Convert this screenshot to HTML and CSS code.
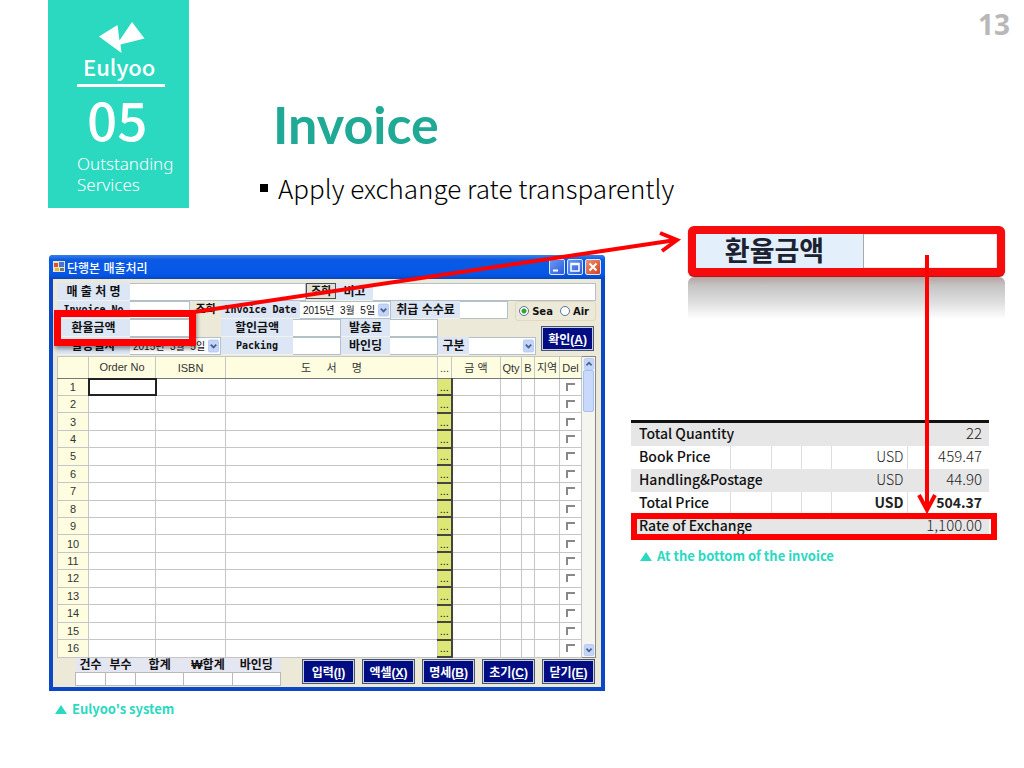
FILE: index.html
```html
<!DOCTYPE html>
<html lang="en">
<head>
    <meta charset="UTF-8">
    <meta name="viewport" content="width=device-width, initial-scale=1.0">
    <title>Eulyoo - Invoice</title>
    <link rel="stylesheet" href="styles.css">
</head>
<body>

    <svg width="0" height="0" class="defs" aria-hidden="true">
        <symbol id="chevron" viewBox="0 0 12 14">
            <rect x="0.5" y="0.5" width="11" height="13" rx="1.5" fill="#c3d5fb" stroke="#b3c6ee"/>
            <path d="M3 5.5l3 3 3-3" fill="none" stroke="#4d6185" stroke-width="2"/>
        </symbol>
    </svg>

    <div class="slide">
        <header class="top">
            <div class="brand">
                <svg class="logo" viewBox="0 0 46 32" aria-hidden="true">
                    <path d="M0 14.500L18.500 3L20.500 18.500L33 0L45.500 16.500L21.500 22.500L22.500 31Z" fill="#fff"/>
                </svg>
                <div class="brand-name">Eulyoo</div>
                <div class="chapter">05</div>
                <div class="chapter-name">Outstanding<br>Services</div>
            </div>
            <div class="heading">
                <h1>Invoice</h1>
                <ul>
                    <li>Apply exchange rate transparently</li>
                </ul>
            </div>
            <div class="page-number">13</div>
        </header>

        <main class="content">
            <figure class="system">
                <div class="window">
                    <div class="titlebar">
                        <svg width="12" height="12" viewBox="0 0 12 12" aria-hidden="true">
                            <rect width="12" height="11" fill="#e8e3cf"/>
                            <rect x="1" y="2" width="4" height="4" fill="#d9542b"/>
                            <rect x="6" y="1" width="5" height="5" fill="#4a76c9"/>
                            <rect x="2" y="7" width="4" height="3" fill="#e9b62f"/>
                            <rect x="7" y="7" width="4" height="3" fill="#777"/>
                        </svg>
                        <span class="title">단행본 매출처리</span>
                        <button class="win-btn" aria-label="Minimize"><svg viewBox="0 0 14 14"><path d="M3 10.500h5" stroke="#fff" stroke-width="2"/></svg></button>
                        <button class="win-btn" aria-label="Maximize"><svg viewBox="0 0 14 14"><path d="M3 3.500h8v7.500H3zM3 4.500h8" fill="none" stroke="#fff" stroke-width="1.500"/></svg></button>
                        <button class="win-btn close" aria-label="Close"><svg viewBox="0 0 14 14"><path d="M3.500 3.500l7 7M10.500 3.500l-7 7" stroke="#fff" stroke-width="2"/></svg></button>
                    </div>

                    <form class="form">
                        <div class="row">
                            <label class="w-label" for="customer">매 출 처 명</label>
                            <input class="w-customer" id="customer" type="text">
                            <button class="find" type="button">조회</button>
                            <label class="w-memo" for="memo">비고</label>
                            <input class="fill" id="memo" type="text">
                        </div>
                        <div class="row">
                            <label class="w-label mono" for="invoiceNo">Invoice No</label>
                            <input class="w-value" id="invoiceNo" type="text">
                            <button class="find flat" type="button">조회</button>
                            <label class="w-date-label mono" for="invoiceDate">Invoice Date</label>
                            <span class="combo w-date">
                                <select id="invoiceDate"><option>2015년 &nbsp;3월 &nbsp;5일</option></select>
                                <svg><use href="#chevron"/></svg>
                            </span>
                            <label class="w-fee" for="fee">취급 수수료</label>
                            <input class="w-small" id="fee" type="text">
                            <div class="radios">
                                <input id="sea" type="radio" name="via" checked><label for="sea">Sea</label>
                                <input id="air" type="radio" name="via"><label for="air">Air</label>
                            </div>
                        </div>
                        <div class="form-body">
                            <div class="rows">
                                <div class="row rate">
                                    <label class="w-label" for="rate">환율금액</label>
                                    <input class="w-value" id="rate" type="text">
                                    <span class="w-space"></span>
                                    <label class="w-mid" for="discount">할인금액</label>
                                    <input class="w-small" id="discount" type="text">
                                    <label class="w-short" for="shipping">발송료</label>
                                    <input class="w-small" id="shipping" type="text">
                                    <span class="mark"></span>
                                </div>
                                <div class="row">
                                    <label class="w-label" for="shipDate">발송일자</label>
                                    <span class="combo w-date">
                                        <select id="shipDate"><option>2015년 &nbsp;3월 &nbsp;5일</option></select>
                                        <svg><use href="#chevron"/></svg>
                                    </span>
                                    <label class="w-mid mono" for="packing">Packing</label>
                                    <input class="w-small" id="packing" type="text">
                                    <label class="w-short" for="binding">바인딩</label>
                                    <input class="w-small" id="binding" type="text">
                                    <label class="w-kind" for="kind">구분</label>
                                    <span class="combo w-select">
                                        <select id="kind"><option></option></select>
                                        <svg><use href="#chevron"/></svg>
                                    </span>
                                </div>
                            </div>
                            <button class="action" type="button">확인(<u>A</u>)</button>
                        </div>
                    </form>

                    <div class="grid">
                        <table>
                            <colgroup>
                                <col class="c-no"><col class="c-order"><col class="c-isbn"><col><col class="c-dots">
                                <col class="c-price"><col class="c-qty"><col class="c-b"><col class="c-area"><col class="c-del">
                            </colgroup>
                            <thead>
                                <tr><th></th><th>Order No</th><th>ISBN</th><th>도 &nbsp; &nbsp; 서 &nbsp; &nbsp; 명</th><th>...</th><th>금 액</th><th>Qty</th><th>B</th><th>지역</th><th>Del</th></tr>
                            </thead>
                            <tbody id="orders"></tbody>
                        </table>
                        <div class="scrollbar">
                            <svg class="up"><use href="#chevron"/></svg>
                            <span class="thumb"></span>
                            <svg><use href="#chevron"/></svg>
                        </div>
                    </div>

                    <div class="bottom">
                        <table class="totals">
                            <tr><th>건수</th><th>부수</th><th>합계</th><th>₩합계</th><th>바인딩</th></tr>
                            <tr><td></td><td></td><td></td><td></td><td></td></tr>
                        </table>
                        <div class="actions">
                            <button class="action">입력(<u>I</u>)</button>
                            <button class="action">엑셀(<u>X</u>)</button>
                            <button class="action">명세(<u>B</u>)</button>
                            <button class="action">초기(<u>C</u>)</button>
                            <button class="action">닫기(<u>E</u>)</button>
                        </div>
                    </div>
                </div>
                <figcaption><span class="tri"></span>Eulyoo's system</figcaption>
            </figure>

            <div class="right">
                <div class="callout">
                    <label for="rateZoom">환율금액</label>
                    <input id="rateZoom" type="text">
                </div>
                <div class="reflection"></div>

                <figure class="invoice">
                    <div class="sheet">
                        <table>
                            <colgroup><col class="i-name"><col class="i-a"><col class="i-b"><col class="i-b"><col class="i-cur"><col></colgroup>
                            <tr class="shade"><th colspan="4">Total Quantity</th><td></td><td>22</td></tr>
                            <tr><th>Book Price</th><td></td><td></td><td></td><td>USD</td><td>459.47</td></tr>
                            <tr class="shade"><th colspan="4">Handling&amp;Postage</th><td>USD</td><td>44.90</td></tr>
                            <tr class="total"><th>Total Price</th><td></td><td></td><td></td><td>USD</td><td>504.37</td></tr>
                            <tr class="shade"><th colspan="4">Rate of Exchange</th><td></td><td>1,100.00</td></tr>
                        </table>
                        <span class="mark"></span>
                    </div>
                    <figcaption><span class="tri"></span>At the bottom of the invoice</figcaption>
                </figure>
            </div>
        </main>

        <svg class="arrows" viewBox="0 0 1024 768" preserveAspectRatio="none" aria-hidden="true">
            <g fill="none" stroke="#fe0000" stroke-width="4">
                <path d="M194 312L676 240M660 233L677 240L662 251"/>
                <path d="M927 255V509M919 495L927 510L935 495"/>
            </g>
        </svg>
    </div>

    <script>
        // empty order lines
        let rows = "";
        for (let i = 1; i <= 16; i++) {
            rows += `<tr><th>${i}</th><td></td><td></td><td></td><td class="dots"><button aria-label="Search ${i}">...</button></td>` +
                `<td></td><td></td><td></td><td></td><td class="del"><input type="checkbox" aria-label="Delete ${i}"></td></tr>`;
        }
        document.getElementById("orders").innerHTML = rows;
    </script>

</body>
</html>
```
FILE: styles.css
```css
:root {
    --mint: #2bd9c1;
    --teal: #20a995;
    --red: #fe0000;
    --navy: #000c82;
    --label: #dce6f5;
    --line: #b9b9b9;
}

* {
    box-sizing: border-box;
}

body {
    margin: 0;
    background: #fff;
    color: #000;
    font-family: "Noto Sans", "Noto Sans CJK KR", sans-serif;
}

button, input, select {
    margin: 0;
    padding: 0;
    border: 0;
    border-radius: 0;
    font: inherit;
    color: inherit;
}

figure, h1, ul {
    margin: 0;
    padding: 0;
}

.defs {
    position: absolute;
}

.slide {
    position: relative;
    min-height: 768px;
}

/* Header */
.top {
    display: flex;
    height: 208px;
    padding: 0 14px 0 48px;
}

.brand {
    width: 141px;
    padding: 22px 0 0 29px;
    background: var(--mint);
    color: #fff;
}

.logo {
    display: block;
    width: 46px;
    height: 32px;
    margin-left: 22px;
}

.brand-name {
    width: 88px;
    padding-left: 6px;
    height: 33px;
    border-bottom: 3px solid #fff;
    font-family: "Noto Sans CJK KR", sans-serif;
    font-size: 22px;
    font-weight: 500;
    line-height: 24px;
}

.chapter {
    padding: 0 0 4px 10px;
    font-family: "Noto Sans CJK KR", sans-serif;
    font-size: 53px;
    font-weight: 500;
    line-height: 62px;
}

.chapter-name {
    font-family: "Noto Sans", sans-serif;
    font-size: 17px;
    font-weight: 300;
    line-height: 21px;
}

.heading {
    flex: 1;
    padding: 91px 0 0 70px;
}

.heading h1 {
    padding-left: 14px;
    font-family: Lato, sans-serif;
    font-size: 52px;
    font-weight: 700;
    line-height: 66px;
    color: var(--teal);
}

.heading ul {
    list-style: none;
    margin-top: 12px;
}

.heading li {
    display: flex;
    align-items: center;
    gap: 10px;
    font-family: "Noto Sans CJK KR", sans-serif;
    font-size: 26px;
    font-weight: 300;
    line-height: 38px;
}

.heading li::before {
    content: "";
    width: 8px;
    height: 8px;
    margin-left: 1px;
    background: #000;
}

.page-number {
    padding-top: 8px;
    font-size: 28px;
    font-weight: 700;
    line-height: 32px;
    color: #b8b8b8;
}

/* Two figures */
.content {
    display: grid;
    grid-template-columns: minmax(0, 556fr) minmax(0, 374fr);
    gap: 26px;
    padding: 18px 19px 0 49px;
}

figcaption {
    display: flex;
    align-items: center;
    gap: 5px;
    font-family: "Noto Sans CJK KR", sans-serif;
    font-size: 13px;
    font-weight: 700;
    line-height: 20px;
    color: var(--mint);
}

.tri {
    border: 6px solid transparent;
    border-top: 0;
    border-bottom: 9px solid var(--mint);
}

.mark {
    position: absolute;
    border: 7px solid var(--red);
}

.system {
    padding-top: 29px;
}

.system figcaption {
    padding: 8px 0 0 6px;
}

/* Window */
.window {
    padding: 0 4px 4px;
    background: #0a48c8;
    border-radius: 4px 4px 0 0;
    font-family: "Liberation Sans", "Noto Sans CJK KR", sans-serif;
    font-size: 11px;
    color: #111;
}

.titlebar {
    display: flex;
    align-items: center;
    gap: 2px;
    height: 24px;
    margin: 0 -4px;
    padding: 0 4px;
    border-radius: 4px 4px 0 0;
    background: linear-gradient(#3a80e8, #0b5ae4 20%, #0657e8 80%, #0647c4);
    color: #fff;
}

.title {
    flex: 1;
    font-size: 12px;
    font-weight: 500;
}

.win-btn {
    width: 16px;
    height: 16px;
    border: 1px solid #dce8ff;
    border-radius: 2px;
    background: linear-gradient(135deg, #6c9af5, #2a5cd8);
}

.win-btn svg {
    display: block;
}

.win-btn.close {
    background: linear-gradient(135deg, #ee9272, #cf4420);
}

.form {
    padding: 4px 5px 1px 4px;
    background: #ece9d8;
}

.row {
    display: flex;
    height: 18px;
}

.row > label {
    border-bottom: 1px solid #f2f1ea;
    background: var(--label);
    font-size: 12px;
    font-weight: 700;
    line-height: 18px;
    text-align: center;
    white-space: nowrap;
}

.row > label.mono {
    font-family: "DejaVu Sans Mono", monospace;
    font-size: 10px;
}

.row > input, .combo {
    border: 1px solid #b4c0c8;
    border-width: 1px 1px 1px 0;
    background: #fff;
}

.w-label {
    width: 73px;
}

.w-customer {
    width: 176px;
}

.w-memo {
    width: 37px;
}

.fill {
    flex: 1;
    min-width: 0;
}

.w-value {
    width: 60px;
}

.w-date-label {
    width: 79px;
}

.w-date {
    width: 91px;
}

.w-fee {
    width: 69px;
}

.w-small {
    width: 48px;
}

.w-space {
    width: 31px;
}

.w-mid {
    width: 72px;
}

.w-short {
    width: 49px;
}

.w-kind {
    width: 31px;
}

.w-select {
    width: 67px;
}

.find {
    width: 30px;
    height: 16px;
    border: 1px solid #44505c;
    background: #e3e1d4;
    font-size: 11px;
    font-weight: 700;
    line-height: 13px;
}

.find.flat {
    width: 31px;
    border: 0;
    background: #ece9d8;
}

.combo {
    display: flex;
    align-items: center;
    padding-right: 1px;
}

.combo select {
    flex: 1;
    min-width: 0;
    height: 16px;
    padding-left: 3px;
    appearance: none;
    background: #fff;
    font-size: 10px;
}

.combo svg {
    width: 11px;
    height: 14px;
}

.form-body {
    display: flex;
    justify-content: space-between;
    align-items: flex-end;
    padding-right: 2px;
}

.form-body .action {
    margin-bottom: 4px;
}

.rate {
    position: relative;
}

.rate .mark {
    left: -3px;
    top: -9px;
    width: 142px;
    height: 36px;
    box-shadow: 1px 3px 4px rgba(0, 0, 0, 0.4);
}

.radios {
    display: flex;
    align-items: center;
    gap: 3px;
    height: 20px;
    margin-left: auto;
    padding: 0 6px 0 3px;
    border: 1px solid #e0d9bf;
    border-radius: 3px;
    font-size: 10px;
    font-weight: 700;
    font-family: "DejaVu Sans", sans-serif;
}

.radios input {
    appearance: none;
    width: 10px;
    height: 10px;
    border: 1px solid #56789c;
    border-radius: 50%;
    background: #fff;
}

.radios label + input {
    margin-left: 4px;
}

.radios input:checked {
    background: radial-gradient(#35a435 2px, #fff 3px);
}

.action {
    width: 53px;
    height: 25px;
    border: 1px solid #47566f;
    outline: 1px solid #c8d0e0;
    outline-offset: -2px;
    background: var(--navy);
    color: #fff;
    font-size: 12px;
    font-weight: 700;
}

/* Order grid */
.grid {
    display: flex;
    padding: 0 5px 0 4px;
    background: #ece9d8;
}

.grid table {
    flex: 1;
    width: 100%;
    min-width: 0;
    height: 302px;
    table-layout: fixed;
    border-collapse: collapse;
    border: 1px solid #666;
    background: #fff;
}

.grid th, .grid td {
    padding: 0;
    border: 1px solid #c6c6c6;
    font-weight: 400;
    line-height: 14px;
}

.grid th {
    background: #fffde0;
    color: #333;
}

.grid thead th {
    height: 22px;
    border-bottom-color: #777;
    white-space: nowrap;
}

.grid tbody tr:first-child td:nth-child(2) {
    border: 2px solid #222;
}

.c-no {
    width: 31px;
}

.c-order {
    width: 67px;
}

.c-isbn {
    width: 70px;
}

.c-dots {
    width: 14px;
}

.c-price {
    width: 49px;
}

.c-qty {
    width: 21px;
}

.c-b {
    width: 13px;
}

.c-area {
    width: 25px;
}

.c-del {
    width: 22px;
}

.grid .dots {
    background: #dce775;
    border-right: 2px solid #444;
    border-bottom: 2px solid #444;
}

.dots button {
    display: block;
    width: 100%;
    height: 14px;
    background: none;
    line-height: 12px;
}

.del input {
    display: block;
    appearance: none;
    width: 9px;
    height: 8px;
    margin: 0 auto;
    border: solid #888;
    border-width: 2px 0 0 2px;
}

.scrollbar {
    display: flex;
    flex-direction: column;
    align-items: center;
    flex: none;
    width: 14px;
    padding: 1px 0;
    border: 1px solid #888;
    border-left: 0;
    background: #f5f5f0;
}

.scrollbar svg {
    width: 12px;
    height: 12px;
}

.scrollbar .up {
    transform: rotate(180deg);
}

.thumb {
    width: 11px;
    height: 42px;
    margin-bottom: auto;
    border: 1px solid #a9bfee;
    border-radius: 2px;
    background: #c9d9fc;
}

.bottom {
    display: flex;
    justify-content: space-between;
    padding: 0 6px 1px 22px;
    background: #ece9d8;
}

.totals {
    width: 206px;
    height: 28px;
    table-layout: fixed;
    border-collapse: collapse;
}

.totals th {
    height: 14px;
    padding: 1px 0 0;
    background: #e4e6f2;
    font-size: 12px;
    line-height: 13px;
    white-space: nowrap;
}

.totals th:nth-child(-n+2) {
    width: 30px;
}

.totals td {
    padding: 0;
    border: 1px solid var(--line);
    background: #fff;
}

.actions {
    display: flex;
    gap: 7px;
    padding-top: 1px;
}

/* Enlarged field */
.callout {
    display: flex;
    height: 50px;
    margin-left: 57px;
    border: 8px solid #f60c0c;
    border-radius: 6px;
    background: #fff;
    box-shadow: inset 0 0 1px #800, 0 1px 1px #a00000;
}

.callout label {
    width: 168px;
    padding-right: 10px;
    border-right: 1px solid #aaa;
    background: #e4effc;
    font-family: "Noto Sans CJK KR", sans-serif;
    font-size: 27px;
    font-weight: 700;
    line-height: 32px;
    text-align: center;
    color: #1c2230;
}

.callout input {
    flex: 1;
    min-width: 0;
    background: none;
}

.reflection {
    height: 42px;
    margin: 1px 0 0 57px;
    border-radius: 6px 6px 0 0;
    background: linear-gradient(#b9a0a0, #c4c4c4 20%, #dedede 60%, #fff);
}

/* Invoice sheet */
.invoice {
    margin: 101px 16px 0 0;
}

.sheet {
    position: relative;
    border-top: 3px solid #111;
}

.sheet table {
    width: 100%;
    table-layout: fixed;
    border-collapse: collapse;
    font-family: "Noto Sans CJK KR", sans-serif;
    font-size: 14px;
}

.sheet th, .sheet td {
    height: 23px;
    padding: 0 7px 3px 0;
    border-right: 1px solid #ddd;
    font-weight: 300;
    line-height: 20px;
    text-align: right;
    color: #222;
    white-space: nowrap;
}

.sheet td:nth-last-child(2) {
    padding-right: 3px;
}

.sheet td:last-child {
    border-right: 0;
    font-size: 15px;
}

.sheet th {
    padding-left: 8px;
    padding-right: 0;
    font-weight: 500;
    text-align: left;
    color: #111;
}

.shade {
    background: #e6e6e6;
}

.sheet .shade th, .sheet .shade td {
    border-right-color: #e6e6e6;
}

.sheet .total td {
    font-size: 14px;
    font-weight: 700;
}

.i-name {
    width: 99px;
}

.i-a {
    width: 41px;
}

.i-b {
    width: 30px;
}

.i-cur {
    width: 76px;
}

.sheet .mark {
    left: 0;
    right: -8px;
    bottom: -2px;
    height: 27px;
    border-width: 6px;
}

.invoice figcaption {
    padding: 8px 0 0 9px;
}

.arrows {
    position: absolute;
    top: 0;
    left: 0;
    width: 100%;
    height: 768px;
    pointer-events: none;
}
```
